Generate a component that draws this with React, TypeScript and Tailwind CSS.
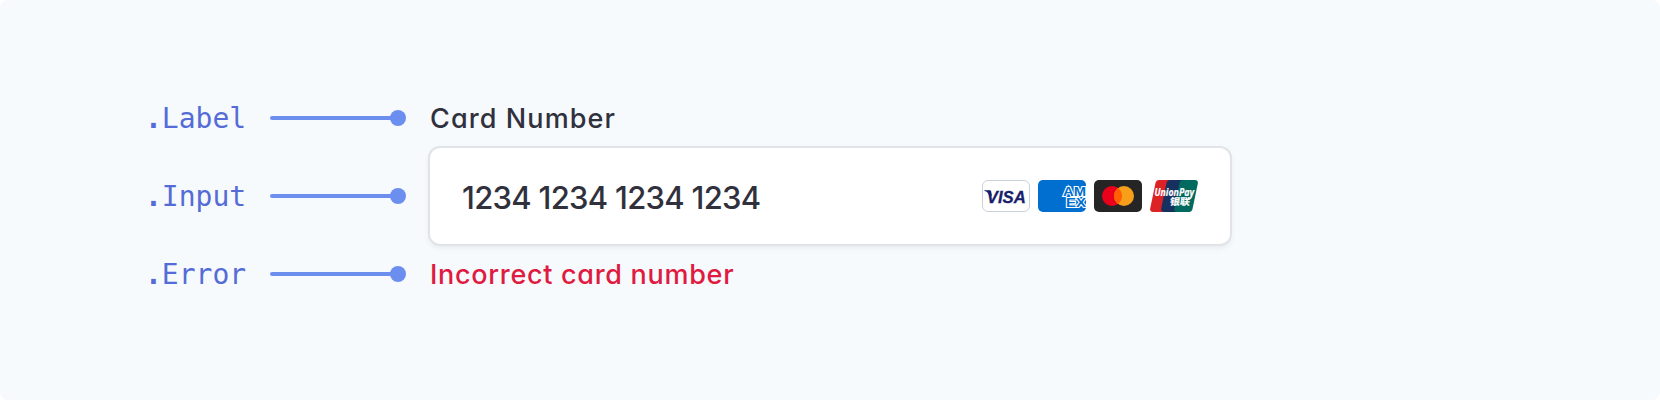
const sans = "font-['Inter',sans-serif] [font-feature-settings:'cv11','ss03']";

function Pointer({ name }: { name: string }) {
  return (
    <div className="flex h-[78px] items-center">
      <span className="w-[125px] whitespace-pre pt-[2px] font-['DejaVu_Sans_Mono',monospace] text-[28px] leading-8 text-[#556cd6]">
        <span className="font-bold">.</span>
        {name}
      </span>
      <span className="h-1 w-[124px] rounded-l-full bg-[#6c8eef]" />
      <span className="-ml-1 size-4 rounded-full bg-[#6c8eef]" />
    </div>
  );
}

function Visa() {
  return (
    <svg width="48" height="32" viewBox="0 0 48 32">
      <rect x=".5" y=".5" width="47" height="31" rx="5.5" fill="#fff" stroke="#c9d1da" />
      <path d="M2.300 10.200h5.200c.8 0 1.300.5 1.500 1.300l.8 4-2 1.500-1.700-3.800c-.8-1.300-2.100-2-3.800-2.500z" fill="#171e6c" />
      <text
        x="4.800"
        y="22.500"
        fill="#171e6c"
        stroke="#171e6c"
        strokeWidth=".3"
        fontFamily="Liberation Sans, sans-serif"
        fontWeight="700"
        fontStyle="italic"
        fontSize="17.300"
        textLength="39"
        lengthAdjust="spacingAndGlyphs"
      >
        VISA
      </text>
    </svg>
  );
}

function Amex() {
  return (
    <svg width="48" height="32" viewBox="0 0 48 32">
      <rect width="48" height="32" rx="5" fill="#016fd0" />
      <g
        fill="#016fd0"
        stroke="#fff"
        strokeWidth="2"
        paintOrder="stroke"
        fontFamily="Liberation Sans, sans-serif"
        fontWeight="700"
        fontSize="13"
      >
        <text x="25" y="15.500" textLength="23" lengthAdjust="spacingAndGlyphs">AM</text>
        <text x="28" y="26.800" textLength="20" lengthAdjust="spacingAndGlyphs">EX</text>
      </g>
    </svg>
  );
}

function Mastercard() {
  return (
    <svg width="48" height="32" viewBox="0 0 48 32">
      <rect width="48" height="32" rx="5" fill="#252525" />
      <circle cx="18" cy="16" r="10" fill="#eb001b" />
      <circle cx="30" cy="16" r="10" fill="#f79e1b" />
      <path d="M24 8a10 10 0 0 1 0 16 10 10 0 0 1 0-16z" fill="#ff5f00" />
    </svg>
  );
}

function UnionPay() {
  return (
    <svg width="48" height="32" viewBox="0 0 48 32">
      <path d="M9 0h12l-6 32H3C.8 32-.2 30.500.2 28.500L5.500 3C6 1 7.200 0 9 0z" fill="#dd2226" />
      <path d="M20 0h14l-6 32H14c-2.200 0-3.200-1.500-2.800-3.500L16.500 3C17 1 18.200 0 20 0z" fill="#16315f" />
      <path d="M33 0h12c2.200 0 3.200 1.500 2.800 3.500L42.500 29c-.5 2-1.700 3-3.500 3H27c-2.200 0-3.200-1.500-2.800-3.500L29.500 3C30 1 31.200 0 33 0z" fill="#016a60" />
      <g fill="#fff" stroke="#fff" strokeWidth=".2" fontWeight="700">
        <text x="4.500" y="16" fontSize="10.500" fontStyle="italic" fontFamily="Open Sans, sans-serif" textLength="39.500" lengthAdjust="spacingAndGlyphs">UnionPay</text>
        <text transform="translate(19.500 25) skewX(-8)" fontSize="9.500" fontFamily="Noto Sans CJK SC, sans-serif" textLength="20" lengthAdjust="spacingAndGlyphs">银联</text>
      </g>
    </svg>
  );
}

export default function App() {
  return (
    <div className="h-[400px] w-[1660px] bg-white">
      <div className="flex h-full rounded-lg bg-[#f6fafd] pl-[145px] pt-[79px]">
        <div className="w-[283px]">
          <Pointer name="Label" />
          <Pointer name="Input" />
          <Pointer name="Error" />
        </div>
        <div className={`w-[804px] pt-6 font-medium ${sans}`}>
          <div className="pl-[2px] text-[27px] leading-8 tracking-[1.1px] text-[#30313d]">Card Number</div>
          <div className="mt-[11px] flex h-[100px] items-center justify-between rounded-xl border-2 border-[#e0e4e8] bg-white px-8 shadow-[0_2px_4px_rgba(0,0,0,0.04),0_4px_10px_rgba(0,0,0,0.02)]">
            <span className="pt-[3px] text-[31px] leading-10 tracking-[-0.7px] text-[#30313d]">1234 1234 1234 1234</span>
            <div className="flex gap-2">
              <Visa />
              <Amex />
              <Mastercard />
              <UnionPay />
            </div>
          </div>
          <div className="mt-[13px] pl-[2px] text-[27px] leading-8 tracking-[0.7px] text-[#df1b41]">Incorrect card number</div>
        </div>
      </div>
    </div>
  );
}
